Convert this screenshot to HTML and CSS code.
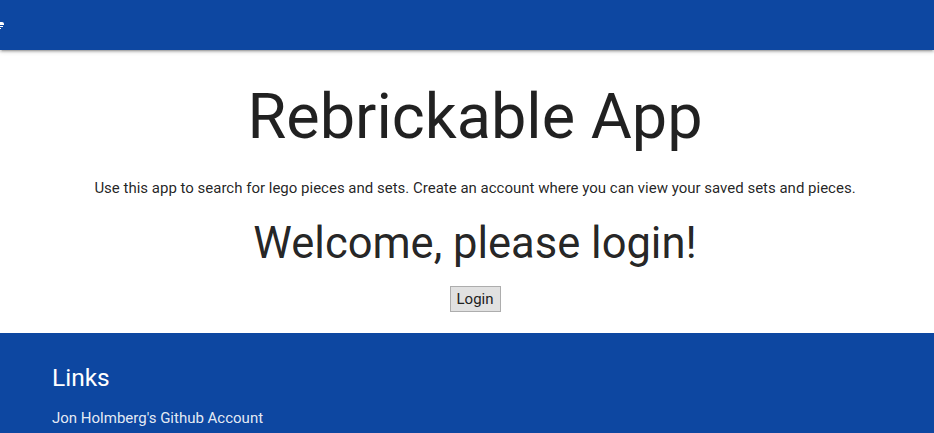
FILE: index.html
```html
<!DOCTYPE html>
<html lang="en">
<head>
<meta charset="utf-8">
<title>Rebrickable App</title>
<link rel="stylesheet" href="styles.css">
</head>
<body>
<nav class="nav">
  <span class="nav-icon"><svg width="4" height="8" viewBox="0 0 4 8"><path d="M0 0 H2 Q4 0 4 2 V3 H0 Z M0 4 H3 V5 H0 Z M0 6 H1 V7 H0 Z" fill="#fff"/></svg></span>
</nav>
<main class="main">
  <h1 class="title">Rebrickable App</h1>
  <p class="lead">Use this app to search for lego pieces and sets. Create an account where you can view your saved sets and pieces.</p>
  <h3 class="welcome">Welcome, please login!</h3>
  <button class="login" type="button">Login</button>
</main>
<footer class="footer">
  <h5 class="footer-title">Links</h5>
  <a class="footer-link" href="#">Jon Holmberg's Github Account</a>
</footer>
</body>
</html>
```
FILE: styles.css
```css
html, body {
  margin: 0;
  padding: 0;
}
body {
  font-family: Roboto, "Liberation Sans", sans-serif;
  color: rgba(0, 0, 0, 0.87);
  background: #fff;
  overflow: hidden;
}
.nav {
  height: 50px;
  background: #0d47a1;
  box-shadow: 0 2px 2px 0 rgba(0,0,0,0.14), 0 3px 1px -2px rgba(0,0,0,0.12), 0 1px 5px 0 rgba(0,0,0,0.2);
  display: flex;
  align-items: center;
  position: relative;
  z-index: 1;
}
.nav-icon {
  display: flex;
  margin-top: 2px;
}
.main {
  display: flex;
  flex-direction: column;
  align-items: center;
  text-align: center;
  padding: 30px 0 21px 16px;
}
.title {
  font-size: 63px;
  font-weight: 400;
  line-height: 74px;
  margin: 0;
}
.lead {
  font-size: 15px;
  line-height: 20px;
  margin: 24px 0 0;
}
.welcome {
  font-size: 43.5px;
  font-weight: 400;
  line-height: 50px;
  margin: 21px 0 0;
}
.login {
  margin-top: 17px;
  font-family: Roboto, "Liberation Sans", sans-serif;
  font-size: 15px;
  color: #212121;
  background: #e1e1e1;
  border: 1px solid #adadad;
  border-radius: 0;
  height: 26px;
  padding: 0 6px;
}
.footer {
  background: #0d47a1;
  color: #fff;
  padding: 30px 52px 20px;
  height: 200px;
}
.footer-title {
  font-size: 24.5px;
  font-weight: 400;
  line-height: 30px;
  margin: 0 0 15px;
}
.footer-link {
  color: rgba(255,255,255,0.9);
  text-decoration: none;
  font-size: 15px;
  line-height: 20px;
}
```
